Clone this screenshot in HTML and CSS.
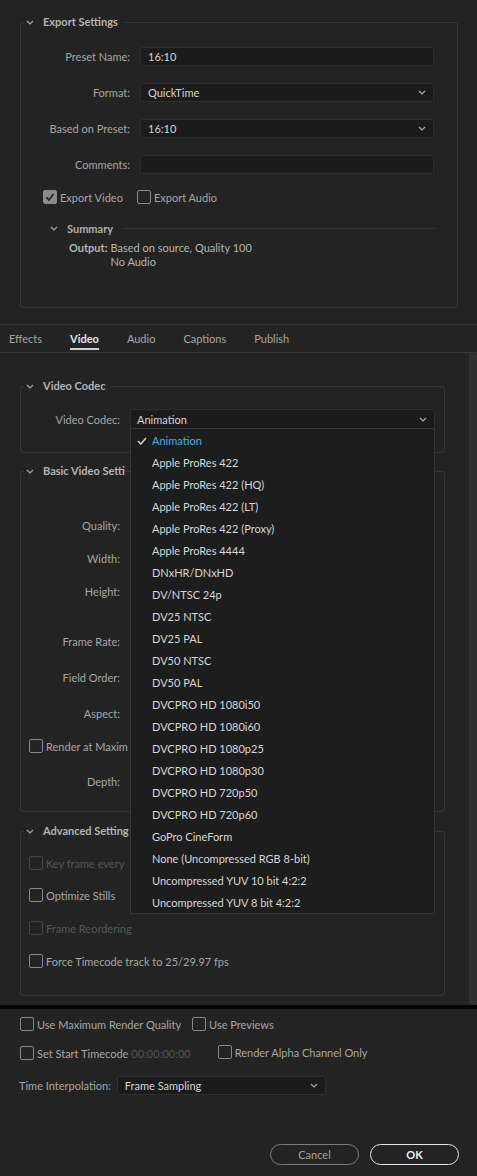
FILE: index.html
```html
<!DOCTYPE html>
<html>
<head>
	<title>Export Settings</title>
	<link rel="stylesheet" href="styles.css">
</head>
<body>
<div class="dialog">

	<section class="top">
		<fieldset class="group export">
			<legend><svg class="chev" viewBox="0 0 8 5"><polyline points="1,1 4,4 7,1"/></svg>Export Settings</legend>
			<div class="fields">
				<div class="field"><label>Preset Name:</label><div class="input">16:10</div></div>
				<div class="field"><label>Format:</label><div class="input select">QuickTime<svg class="chev" viewBox="0 0 8 5"><polyline points="1,1 4,4 7,1"/></svg></div></div>
				<div class="field"><label>Based on Preset:</label><div class="input select">16:10<svg class="chev" viewBox="0 0 8 5"><polyline points="1,1 4,4 7,1"/></svg></div></div>
				<div class="field"><label>Comments:</label><div class="input"></div></div>
			</div>
			<div class="checks">
				<span class="check"><i class="cb on"><svg viewBox="0 0 12 12"><polyline points="2.5,6.5 5,9 9.5,3"/></svg></i>Export Video</span>
				<span class="check"><i class="cb"></i>Export Audio</span>
			</div>
			<div class="sub-head"><svg class="chev" viewBox="0 0 8 5"><polyline points="1,1 4,4 7,1"/></svg>Summary<span class="rule"></span></div>
			<div class="summary">
				<b>Output:</b>
				<div>Based on source, Quality 100<br>No Audio</div>
			</div>
		</fieldset>
	</section>

	<nav class="tabs">
		<span class="tab">Effects</span>
		<span class="tab active">Video</span>
		<span class="tab">Audio</span>
		<span class="tab">Captions</span>
		<span class="tab">Publish</span>
	</nav>

	<section class="scroll">
		<div class="scroll-content">
			<fieldset class="group codec">
				<legend><svg class="chev" viewBox="0 0 8 5"><polyline points="1,1 4,4 7,1"/></svg>Video Codec</legend>
				<div class="field">
					<label>Video Codec:</label>
					<div class="input select open">Animation<svg class="chev" viewBox="0 0 8 5"><polyline points="1,1 4,4 7,1"/></svg>
						<ul class="menu">
							<li class="sel"><svg class="tick" viewBox="0 0 10 8"><polyline points="1,4 3.8,7 9,1"/></svg>Animation</li>
							<li>Apple ProRes 422</li>
							<li>Apple ProRes 422 (HQ)</li>
							<li>Apple ProRes 422 (LT)</li>
							<li>Apple ProRes 422 (Proxy)</li>
							<li>Apple ProRes 4444</li>
							<li>DNxHR/DNxHD</li>
							<li>DV/NTSC 24p</li>
							<li>DV25 NTSC</li>
							<li>DV25 PAL</li>
							<li>DV50 NTSC</li>
							<li>DV50 PAL</li>
							<li>DVCPRO HD 1080i50</li>
							<li>DVCPRO HD 1080i60</li>
							<li>DVCPRO HD 1080p25</li>
							<li>DVCPRO HD 1080p30</li>
							<li>DVCPRO HD 720p50</li>
							<li>DVCPRO HD 720p60</li>
							<li>GoPro CineForm</li>
							<li>None (Uncompressed RGB 8-bit)</li>
							<li>Uncompressed YUV 10 bit 4:2:2</li>
							<li>Uncompressed YUV 8 bit 4:2:2</li>
						</ul>
					</div>
				</div>
			</fieldset>

			<!-- the open menu covers the right part of these two groups -->
			<fieldset class="group basic">
				<legend class="under"><svg class="chev" viewBox="0 0 8 5"><polyline points="1,1 4,4 7,1"/></svg>Basic Video Setti</legend>
				<div class="vrow first"><label>Quality:</label></div>
				<div class="vrow"><label>Width:</label></div>
				<div class="vrow"><label>Height:</label></div>
				<div class="vrow wide"><label>Frame Rate:</label></div>
				<div class="vrow mid"><label>Field Order:</label></div>
				<div class="vrow mid"><label>Aspect:</label></div>
				<div class="vrow"><span class="check"><i class="cb"></i>Render at Maxim</span></div>
				<div class="vrow wider"><label>Depth:</label></div>
			</fieldset>

			<fieldset class="group advanced">
				<legend class="under"><svg class="chev" viewBox="0 0 8 5"><polyline points="1,1 4,4 7,1"/></svg>Advanced Setting</legend>
				<div class="vrow first-adv"><span class="check off"><i class="cb"></i>Key frame every</span></div>
				<div class="vrow tight"><span class="check"><i class="cb"></i>Optimize Stills</span></div>
				<div class="vrow"><span class="check off"><i class="cb"></i>Frame Reordering</span></div>
				<div class="vrow"><span class="check"><i class="cb"></i>Force Timecode track to 25/29.97 fps</span></div>
			</fieldset>
		</div>
		<div class="scrollbar"><div class="thumb"></div></div>
	</section>

	<div class="divider"></div>

	<section class="bottom">
		<div class="brow">
			<span class="check"><i class="cb"></i>Use Maximum Render Quality</span>
			<span class="check"><i class="cb"></i>Use Previews</span>
		</div>
		<div class="brow second">
			<span class="check"><i class="cb"></i>Set Start Timecode <span class="tc">00:00:00:00</span></span>
			<span class="check alpha"><i class="cb"></i>Render Alpha Channel Only</span>
		</div>
		<div class="brow third">
			<label>Time Interpolation:</label>
			<div class="input select interp">Frame Sampling<svg class="chev" viewBox="0 0 8 5"><polyline points="1,1 4,4 7,1"/></svg></div>
		</div>
		<div class="buttons">
			<button class="btn">Cancel</button>
			<button class="btn primary">OK</button>
		</div>
	</section>

</div>
</body>
</html>
```

FILE: styles.css
```css
html, body { margin: 0; padding: 0; background: #232323; }
body { font-family: "Lato", "Liberation Sans", sans-serif; font-size: 11px; color: #a6a6a6; overflow: hidden; }
.dialog { width: 477px; height: 1176px; display: flex; flex-direction: column; }

/* groups */
.group { margin: 0; padding: 0; border: 1px solid #363636; border-radius: 3px; min-width: 0; }
.group legend { margin-left: 3px; padding: 0 7px 0 2px; line-height: 14px; font-weight: bold; color: #b4b4b4; display: flex; align-items: center; white-space: nowrap; }
.group legend.under { padding-right: 0; }
.chev { width: 8px; height: 5px; fill: none; stroke: #a8a8a8; stroke-width: 1.2; flex: none; }
.group legend .chev { margin-right: 9px; }

.field { display: flex; align-items: center; height: 36px; }
.field label { text-align: right; flex: none; }
.input { flex: 1; height: 19px; box-sizing: border-box; background: #1b1b1b; border: 1px solid #2e2e2e; border-radius: 2px; color: #d4d4d4; padding-left: 7px; display: flex; align-items: center; }
.select .chev { margin-left: auto; margin-right: 7px; }

/* top */
.top { height: 325px; padding-top: 15px; box-sizing: border-box; border-bottom: 1px solid #353535; flex: none; }
.export { margin: 0 19px 0 20px; padding-bottom: 38px; }
.export legend { margin-top: 1px; }
.export .fields { padding-top: 9px; padding-right: 23px; }
.export .field label { width: 109px; margin-right: 10px; }

.check { display: inline-flex; align-items: center; color: #a6a6a6; white-space: nowrap; }
.cb { width: 14px; height: 14px; box-sizing: border-box; border: 1.5px solid #888; border-radius: 2px; margin-right: 3px; flex: none; display: flex; align-items: center; justify-content: center; }
.cb.on { background: #8b8b8b; border-color: #8b8b8b; }
.cb svg { width: 12px; height: 12px; fill: none; stroke: #262626; stroke-width: 1.8; }
.check.off { color: #555; }
.check.off .cb { border-color: #454545; }

.checks { display: flex; height: 30px; align-items: center; padding-left: 22px; gap: 14px; }
.sub-head { display: flex; align-items: center; height: 20px; margin-top: 6px; padding-left: 29px; font-weight: bold; color: #b0b0b0; }
.sub-head .chev { margin-right: 9px; }
.sub-head .rule { flex: 1; height: 1px; background: #363636; margin: 0 22px 0 10px; }
.summary { display: flex; margin-top: 3px; padding-left: 48px; line-height: 14px; color: #b4b4b4; }
.summary b { margin-right: 3px; }

/* tabs */
.tabs { height: 27px; border-bottom: 1px solid #353535; display: flex; gap: 28px; padding-left: 9px; flex: none; }
.tab { padding-top: 7px; line-height: 14px; height: 23px; box-sizing: border-box; color: #a6a6a6; }
.tab.active { color: #e4e4e4; font-weight: bold; border-bottom: 2px solid #d0d0d0; height: 25px; }

/* scroll area */
.scroll { height: 652px; display: flex; flex: none; }
.scroll-content { flex: 1; padding-top: 26px; }
.scroll-content .group { margin: 0 24px 0 20px; }
.scrollbar { width: 7px; background: #2a2a2a; border-left: 1px solid #2f2f2f; }
.thumb { height: 100%; background: #313131; border-radius: 3px; }

.codec { padding: 8px 9px 15px 0; }
.codec .field label { width: 99px; margin-right: 10px; }
.codec .field .input { height: 20px; padding-left: 6px; }
.open { position: relative; }
.menu { position: absolute; z-index: 10; top: 100%; left: -1px; right: -1px; margin: 0; padding: 0; list-style: none; background: #1d1d1d; border: 1px solid #363636; box-sizing: border-box; }
.menu li { height: 22px; line-height: 23px; padding-left: 21px; color: #d6d6d6; position: relative; }
.menu li.sel { color: #46aee8; }
.tick { position: absolute; left: 6px; top: 8px; width: 10px; height: 8px; fill: none; stroke: #d0d0d0; stroke-width: 1.5; }

.basic { margin-top: 11px !important; padding-bottom: 20px; }
.advanced { margin-top: 12px !important; padding-bottom: 24px; }
.vrow { height: 20px; margin-top: 13px; display: flex; align-items: center; padding-left: 8px; }
.vrow label { width: 91px; text-align: right; }
.vrow.first { margin-top: 37px; }
.vrow.wide { margin-top: 30px; }
.vrow.mid { margin-top: 16px; }
.vrow.wider { margin-top: 15px; }
.vrow.first-adv { margin-top: 15px; }
.vrow.tight { margin-top: 12px; }

.divider { height: 4px; background: #050505; flex: none; }

/* bottom */
.bottom { flex: 1; padding: 5px 18px 0 20px; }
.brow { display: flex; align-items: center; height: 20px; gap: 11px; }
.brow.second { margin-top: 9px; }
.brow.third { margin-top: 12px; margin-left: -1px; }
.tc { color: #555; margin-left: 3px; }
.alpha { margin-left: 16px; margin-top: -2px; }
.interp { flex: none; width: 209px; height: 19px; margin-left: -5px; padding-left: 7px; }
.buttons { display: flex; justify-content: flex-end; gap: 11px; margin-top: 49px; }
.btn { width: 89px; height: 21px; border-radius: 11px; background: transparent; border: 1.5px solid #7c7c7c; color: #a3a3a3; font: inherit; padding: 0; }
.btn.primary { border-color: #e6e6e6; color: #f0f0f0; font-weight: bold; }
```
